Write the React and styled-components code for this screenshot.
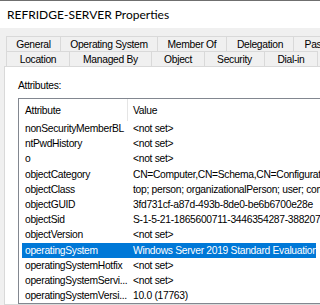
import styled, { createGlobalStyle } from "styled-components";

const GlobalStyle = createGlobalStyle`
  html, body {
    margin: 0;
    padding: 0;
    background: #f0f0f0;
  }
  body {
    font-family: "Liberation Sans", Arial, sans-serif;
    font-size: 10.3px;
    letter-spacing: -0.3px;
    color: #000;
  }
`;

const tabsTop = [
  { label: "General", width: 55 },
  { label: "Operating System", width: 98 },
  { label: "Member Of", width: 70 },
  { label: "Delegation", width: 68 },
  { label: "Pas", width: 40 },
];

const tabsBottom = [
  { label: "Location", width: 64 },
  { label: "Managed By", width: 83 },
  { label: "Object", width: 54 },
  { label: "Security", width: 61 },
  { label: "Dial-in", width: 54 },
];

const rows = [
  ["nonSecurityMemberBL", "<not set>"],
  ["ntPwdHistory", "<not set>"],
  ["o", "<not set>"],
  ["objectCategory", "CN=Computer,CN=Schema,CN=Configuration,DC=refridge,DC=local"],
  ["objectClass", "top; person; organizationalPerson; user; computer"],
  ["objectGUID", "3fd731cf-a87d-493b-8de0-be6b6700e28e"],
  ["objectSid", "S-1-5-21-1865600711-3446354287-3882071024-1105"],
  ["objectVersion", "<not set>"],
  ["operatingSystem", "Windows Server 2019 Standard Evaluation", true],
  ["operatingSystemHotfix", "<not set>"],
  ["operatingSystemServi...", "<not set>"],
  ["operatingSystemVersi...", "10.0 (17763)"],
];

function App() {
  return (
    <Window>
      <GlobalStyle />
      <TitleBar>REFRIDGE-SERVER Properties</TitleBar>
      <Body>
        <TabRow>
          {tabsTop.map((t) => (
            <Tab key={t.label} $width={t.width}>
              {t.label}
            </Tab>
          ))}
        </TabRow>
        <TabRow>
          {tabsBottom.map((t) => (
            <Tab key={t.label} $width={t.width}>
              {t.label}
            </Tab>
          ))}
        </TabRow>
        <Panel>
          <Label>Attributes:</Label>
          <ListBox>
            <Header>
              <HeaderCell $first>Attribute</HeaderCell>
              <HeaderCell>Value</HeaderCell>
            </Header>
            {rows.map(([name, value, selected]) => (
              <Row key={name}>
                <Selection $selected={selected}>
                  <NameCell>{name}</NameCell>
                  <ValueCell>{value}</ValueCell>
                </Selection>
              </Row>
            ))}
          </ListBox>
        </Panel>
      </Body>
    </Window>
  );
}

export default App;

const Window = styled.div`
  width: 320px;
  height: 305px;
  overflow: hidden;
  background: #f0f0f0;
  display: flex;
  flex-direction: column;
`;

const TitleBar = styled.div`
  height: 27px;
  flex-shrink: 0;
  background: #fff;
  border-top: 1px solid #6f6f6f;
  padding-left: 7px;
  display: flex;
  align-items: center;
  font-family: Lato, "Liberation Sans", Arial, sans-serif;
  font-size: 12px;
  letter-spacing: 0;
`;

const Body = styled.div`
  flex: 1;
  padding: 8px 0 0 4px;
  display: flex;
  flex-direction: column;
`;

const TabRow = styled.div`
  display: flex;
  height: 15px;
  padding-left: 2px;
`;

const Tab = styled.div`
  width: ${(p) => p.$width}px;
  flex-shrink: 0;
  box-sizing: border-box;
  border: 1px solid #d9d9d9;
  border-bottom: none;
  margin-right: -1px;
  background: #f0f0f0;
  display: flex;
  align-items: center;
  justify-content: center;
  white-space: nowrap;
  overflow: hidden;
  line-height: 13px;
`;

const Panel = styled.div`
  flex: 1;
  background: #fff;
  border: 1px solid #d9d9d9;
  border-right: none;
  padding: 12px 0 0 13px;
`;

const Label = styled.div`
  line-height: 13px;
  margin-bottom: 6px;
`;

const ListBox = styled.div`
  width: 340px;
  border: 1px solid #828790;
  border-right: none;
  padding: 0 0 0 3px;
`;

const Header = styled.div`
  display: flex;
  height: 22px;
`;

const HeaderCell = styled.div`
  width: ${(p) => (p.$first ? "106px" : "auto")};
  flex: ${(p) => (p.$first ? "none" : "1")};
  border-right: ${(p) => (p.$first ? "1px solid #e5e5e5" : "none")};
  padding-left: ${(p) => (p.$first ? "3px" : "5px")};
  box-sizing: border-box;
  display: flex;
  align-items: center;
`;

const Row = styled.div`
  height: 15.2px;
  display: flex;
`;

const Selection = styled.div`
  display: flex;
  align-items: center;
  width: 294px;
  background: ${(p) => (p.$selected ? "#0078d7" : "transparent")};
  color: ${(p) => (p.$selected ? "#fff" : "#000")};
`;

const NameCell = styled.div`
  width: 106px;
  flex-shrink: 0;
  padding-left: 3px;
  box-sizing: border-box;
  white-space: nowrap;
  overflow: hidden;
`;

const ValueCell = styled.div`
  padding-left: 5px;
  white-space: nowrap;
`;
